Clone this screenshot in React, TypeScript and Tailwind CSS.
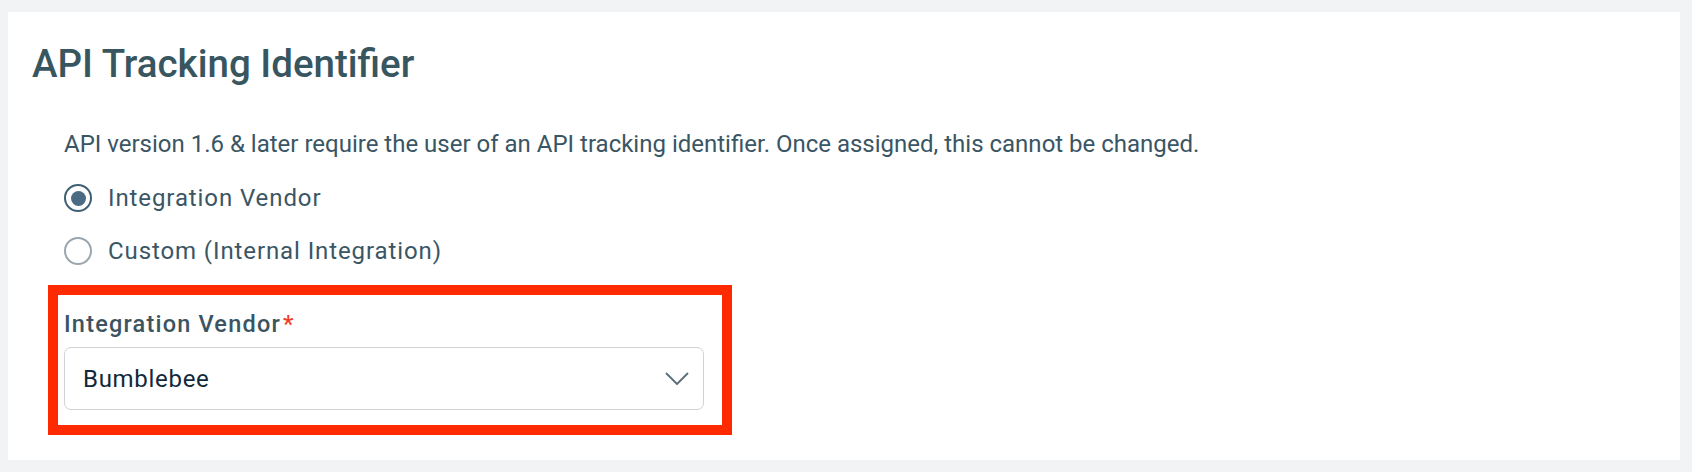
import { useState } from "react";

const vendors = ["Bumblebee", "Hornet", "Wasp"];

function Radio({ checked, label, onSelect }: { checked: boolean; label: string; onSelect: () => void }) {
  return (
    <label className="flex h-[36px] cursor-pointer items-center gap-[16px]" onClick={onSelect}>
      {checked ? (
        <span className="flex h-[28px] w-[28px] items-center justify-center rounded-full border-[2.5px] border-[#3f5f74]">
          <span className="h-[15px] w-[15px] rounded-full bg-[#4a6b83]" />
        </span>
      ) : (
        <span className="h-[28px] w-[28px] rounded-full border-2 border-[#9ba6ad]" />
      )}
      <span className="text-[24px] leading-[28px] tracking-[0.9px] text-[#3a5665]">{label}</span>
    </label>
  );
}

export default function App() {
  const [mode, setMode] = useState<"vendor" | "custom">("vendor");
  const [vendor] = useState(vendors[0]);

  return (
    <div className="h-[472px] w-full bg-[#f1f3f5] pl-[8px] pr-[12px] pt-[12px] font-['Roboto',sans-serif]">
      <div className="h-[448px] bg-white pl-[24px] pt-[30px]">
        <h2 className="text-[38.5px] font-medium leading-[44px] text-[#38565f]">API Tracking Identifier</h2>

        <p className="ml-[32px] mt-[44px] text-[24px] leading-[28px] text-[#3a5563]">
          API version 1.6 &amp; later require the user of an API tracking identifier. Once assigned, this cannot be changed.
        </p>

        {/* Identifier type */}
        <div className="ml-[32px] mt-[22px] flex flex-col gap-[17px]">
          <Radio checked={mode === "vendor"} label="Integration Vendor" onSelect={() => setMode("vendor")} />
          <Radio checked={mode === "custom"} label="Custom (Internal Integration)" onSelect={() => setMode("custom")} />
        </div>

        {/* Vendor select (highlighted) */}
        <div className="ml-[16px] mt-[16px] w-[684px] border-[10px] border-[#ff2a00] pb-[15px] pl-[6px] pr-[18px] pt-[16px]">
          <div className="flex items-start text-[23.5px] font-medium leading-[26px] tracking-[1.2px] text-[#3b5461]">
            Integration Vendor
            <span className="ml-[2px] text-[#f0401f]">*</span>
          </div>
          <div className="mt-[10px] flex h-[63px] items-center justify-between rounded-[7px] border border-[#cdd3d7] bg-white pl-[18px] pr-[14px]">
            <span className="text-[24px] tracking-[0.7px] text-[#12293a]">{vendor}</span>
            <svg width="24" height="14" viewBox="0 0 24 14" fill="none">
              <path d="M1.5 1.5 L12 12 L22.5 1.5" stroke="#5b6d78" strokeWidth="1.8" strokeLinecap="round" strokeLinejoin="round" />
            </svg>
          </div>
        </div>
      </div>
    </div>
  );
}
